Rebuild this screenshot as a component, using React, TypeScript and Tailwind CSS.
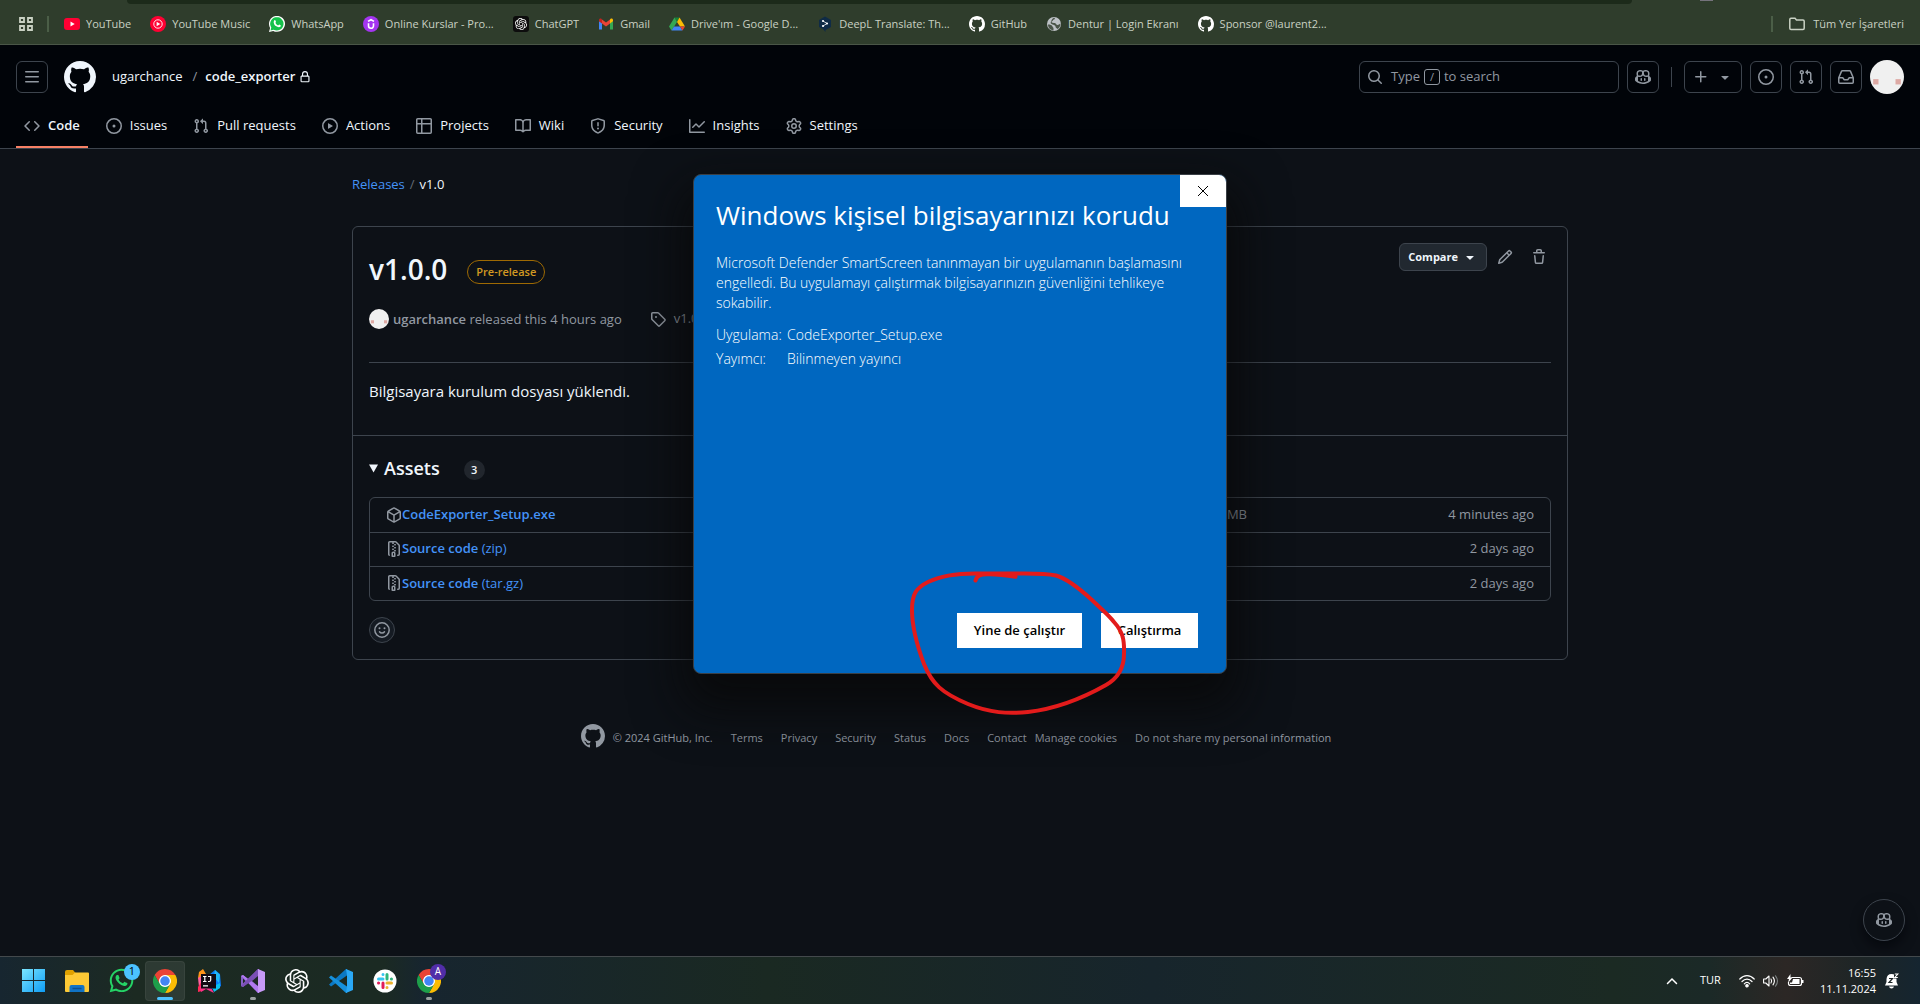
import type { ReactNode } from "react";
import { FaWhatsapp } from "react-icons/fa6";
import { SiOpenai } from "react-icons/si";

const paths = {
  github:
    "M8 0C3.58 0 0 3.58 0 8c0 3.54 2.29 6.53 5.47 7.59.4.07.55-.17.55-.38 0-.19-.01-.82-.01-1.49-2.01.37-2.53-.49-2.69-.94-.09-.23-.48-.94-.82-1.13-.28-.15-.68-.52-.01-.53.63-.01 1.08.58 1.23.82.72 1.21 1.87.87 2.33.66.07-.52.28-.87.51-1.07-1.78-.2-3.64-.89-3.64-3.95 0-.87.31-1.59.82-2.15-.08-.2-.36-1.02.08-2.12 0 0 .67-.21 2.2.82.64-.18 1.32-.27 2-.27.68 0 1.36.09 2 .27 1.53-1.04 2.2-.82 2.2-.82.44 1.1.16 1.92.08 2.12.51.56.82 1.27.82 2.15 0 3.07-1.87 3.75-3.65 3.95.29.25.54.73.54 1.48 0 1.07-.01 1.93-.01 2.2 0 .21.15.46.55.38A8.013 8.013 0 0016 8c0-4.42-3.58-8-8-8z",
  code: "m11.28 3.22 4.25 4.25a.75.75 0 0 1 0 1.06l-4.25 4.25a.749.749 0 0 1-1.275-.326.749.749 0 0 1 .215-.734L13.94 8l-3.72-3.72a.749.749 0 0 1 .326-1.275.749.749 0 0 1 .734.215Zm-6.56 0a.751.751 0 0 1 1.042.018.751.751 0 0 1 .018 1.042L2.06 8l3.72 3.72a.749.749 0 0 1-.326 1.275.749.749 0 0 1-.734-.215L.47 8.53a.75.75 0 0 1 0-1.06Z",
  issue:
    "M8 9.5a1.5 1.5 0 1 0 0-3 1.5 1.5 0 0 0 0 3ZM8 0a8 8 0 1 1 0 16A8 8 0 0 1 8 0ZM1.5 8a6.5 6.5 0 1 0 13 0 6.5 6.5 0 0 0-13 0Z",
  pull: "M1.5 3.25a2.25 2.25 0 1 1 3 2.122v5.256a2.251 2.251 0 1 1-1.5 0V5.372A2.25 2.25 0 0 1 1.5 3.25Zm5.677-.177L9.573.677A.25.25 0 0 1 10 .854V2.5h1A2.5 2.5 0 0 1 13.5 5v5.628a2.251 2.251 0 1 1-1.5 0V5a1 1 0 0 0-1-1h-1v1.646a.25.25 0 0 1-.427.177L7.177 3.427a.25.25 0 0 1 0-.354ZM3.75 2.5a.75.75 0 1 0 0 1.5.75.75 0 0 0 0-1.5Zm0 9.5a.75.75 0 1 0 0 1.5.75.75 0 0 0 0-1.5Zm8.25.75a.75.75 0 1 0 1.5 0 .75.75 0 0 0-1.5 0Z",
  play: "M8 0a8 8 0 1 1 0 16A8 8 0 0 1 8 0ZM1.5 8a6.5 6.5 0 1 0 13 0 6.5 6.5 0 0 0-13 0Zm4.879-2.773 4.264 2.559a.25.25 0 0 1 0 .428l-4.264 2.559A.25.25 0 0 1 6 10.559V5.442a.25.25 0 0 1 .379-.215Z",
  table:
    "M0 1.75C0 .784.784 0 1.75 0h12.5C15.216 0 16 .784 16 1.75v12.5A1.75 1.75 0 0 1 14.25 16H1.75A1.75 1.75 0 0 1 0 14.25ZM6.5 6.5v8h7.75a.25.25 0 0 0 .25-.25V6.5Zm8-1.5V1.75a.25.25 0 0 0-.25-.25H6.5V5Zm-13 1.5v7.75c0 .138.112.25.25.25H5v-8ZM5 5V1.5H1.75a.25.25 0 0 0-.25.25V5Z",
  book: "M0 1.75A.75.75 0 0 1 .75 1h4.253c1.227 0 2.317.59 3 1.501A3.743 3.743 0 0 1 11.006 1h4.245a.75.75 0 0 1 .75.75v10.5a.75.75 0 0 1-.75.75h-4.507a2.25 2.25 0 0 0-1.591.659l-.622.621a.75.75 0 0 1-1.06 0l-.622-.621A2.25 2.25 0 0 0 5.258 13H.75a.75.75 0 0 1-.75-.75Zm7.251 10.324.004-5.073-.002-2.253A2.25 2.25 0 0 0 5.003 2.5H1.5v9h3.757a3.75 3.75 0 0 1 1.994.574ZM8.755 4.75l-.004 7.322a3.752 3.752 0 0 1 1.992-.572H14.5v-9h-3.495a2.25 2.25 0 0 0-2.25 2.25Z",
  shield:
    "M7.467.133a1.748 1.748 0 0 1 1.066 0l5.25 1.68A1.75 1.75 0 0 1 15 3.48V7c0 1.566-.32 3.182-1.303 4.682-.983 1.498-2.585 2.813-5.032 3.855a1.697 1.697 0 0 1-1.33 0c-2.447-1.042-4.049-2.357-5.032-3.855C1.32 10.182 1 8.566 1 7V3.48a1.75 1.75 0 0 1 1.217-1.667Zm.61 1.429a.25.25 0 0 0-.153 0l-5.25 1.68a.25.25 0 0 0-.174.238V7c0 1.358.275 2.666 1.057 3.86.784 1.194 2.121 2.34 4.366 3.297a.196.196 0 0 0 .154 0c2.245-.956 3.582-2.104 4.366-3.298C13.225 9.666 13.5 8.36 13.5 7V3.48a.251.251 0 0 0-.174-.237l-5.25-1.68ZM8.75 4.75v3a.75.75 0 0 1-1.5 0v-3a.75.75 0 0 1 1.5 0ZM9 10.5a1 1 0 1 1-2 0 1 1 0 0 1 2 0Z",
  graph:
    "M1.5 1.75V13.5h13.75a.75.75 0 0 1 0 1.5H.75a.75.75 0 0 1-.75-.75V1.75a.75.75 0 0 1 1.5 0Zm14.28 2.53-5.25 5.25a.75.75 0 0 1-1.06 0L7 7.06 4.28 9.78a.751.751 0 0 1-1.042-.018.751.751 0 0 1-.018-1.042l3.25-3.25a.75.75 0 0 1 1.06 0L10 7.94l4.72-4.72a.751.751 0 0 1 1.042.018.751.751 0 0 1 .018 1.042Z",
  gear: "M8 0a8.2 8.2 0 0 1 .701.031C9.444.095 9.99.645 10.16 1.29l.288 1.107c.018.066.079.158.212.224.231.114.454.243.668.386.123.082.233.09.299.071l1.103-.303c.644-.176 1.392.021 1.82.63.27.385.506.792.704 1.218.315.675.111 1.422-.364 1.891l-.814.806c-.049.048-.098.147-.088.294.016.257.016.515 0 .772-.01.147.038.246.088.294l.814.806c.475.469.679 1.216.364 1.891a7.977 7.977 0 0 1-.704 1.217c-.428.61-1.176.807-1.82.63l-1.102-.302c-.067-.019-.177-.011-.3.071a5.909 5.909 0 0 1-.668.386c-.133.066-.194.158-.211.224l-.29 1.106c-.168.646-.715 1.196-1.458 1.26a8.006 8.006 0 0 1-1.402 0c-.743-.064-1.289-.614-1.458-1.26l-.289-1.106c-.018-.066-.079-.158-.212-.224a5.738 5.738 0 0 1-.668-.386c-.123-.082-.233-.09-.299-.071l-1.103.303c-.644.176-1.392-.021-1.82-.63a8.12 8.12 0 0 1-.704-1.218c-.315-.675-.111-1.422.363-1.891l.815-.806c.05-.048.098-.147.088-.294a6.214 6.214 0 0 1 0-.772c.01-.147-.038-.246-.088-.294l-.815-.806C.635 6.045.431 5.298.746 4.623a7.92 7.92 0 0 1 .704-1.217c.428-.61 1.176-.807 1.82-.63l1.102.302c.067.019.177.011.3-.071.214-.143.437-.272.668-.386.133-.066.194-.158.211-.224l.29-1.106C6.009.645 6.556.095 7.299.03 7.53.01 7.764 0 8 0Zm-.571 1.525c-.036.003-.108.036-.137.146l-.289 1.105c-.147.561-.549.967-.998 1.189-.173.086-.34.183-.5.29-.417.278-.97.423-1.529.27l-1.103-.303c-.109-.03-.175.016-.195.045-.22.312-.412.644-.573.99-.014.031-.021.11.059.19l.815.806c.411.406.562.957.53 1.456a4.709 4.709 0 0 0 0 .582c.032.499-.119 1.05-.53 1.456l-.815.806c-.081.08-.073.159-.059.19.162.346.353.677.573.989.02.03.085.076.195.046l1.102-.303c.56-.153 1.113-.008 1.53.27.161.107.328.204.501.29.447.222.85.629.997 1.189l.289 1.105c.029.109.101.143.137.146a6.6 6.6 0 0 0 1.142 0c.036-.003.108-.036.137-.146l.289-1.105c.147-.561.549-.967.998-1.189.173-.086.34-.183.5-.29.417-.278.97-.423 1.529-.27l1.103.303c.109.029.175-.016.195-.045.22-.313.411-.644.573-.99.014-.031.021-.11-.059-.19l-.815-.806c-.411-.406-.562-.957-.53-1.456a4.709 4.709 0 0 0 0-.582c-.032-.499.119-1.05.53-1.456l.815-.806c.081-.08.073-.159.059-.19a6.464 6.464 0 0 0-.573-.989c-.02-.03-.085-.076-.195-.046l-1.102.303c-.56.153-1.113.008-1.53-.27a4.44 4.44 0 0 0-.501-.29c-.447-.222-.85-.629-.997-1.189l-.289-1.105c-.029-.11-.101-.143-.137-.146a6.6 6.6 0 0 0-1.142 0ZM11 8a3 3 0 1 1-6 0 3 3 0 0 1 6 0ZM9.5 8a1.5 1.5 0 1 0-3.001.001A1.5 1.5 0 0 0 9.5 8Z",
  lock: "M4 4a4 4 0 0 1 8 0v2h.25c.966 0 1.75.784 1.75 1.75v5.5A1.75 1.75 0 0 1 12.25 15h-8.5A1.75 1.75 0 0 1 2 13.25v-5.5C2 6.784 2.784 6 3.75 6H4Zm8.25 3.5h-8.5a.25.25 0 0 0-.25.25v5.5c0 .138.112.25.25.25h8.5a.25.25 0 0 0 .25-.25v-5.5a.25.25 0 0 0-.25-.25ZM10.5 6V4a2.5 2.5 0 1 0-5 0v2Z",
  search:
    "M10.68 11.74a6 6 0 0 1-7.922-8.982 6 6 0 0 1 8.982 7.922l3.04 3.04a.749.749 0 0 1-.326 1.275.749.749 0 0 1-.734-.215ZM11.5 7a4.499 4.499 0 1 0-8.997 0A4.499 4.499 0 0 0 11.5 7Z",
  plus: "M7.75 2a.75.75 0 0 1 .75.75V7h4.25a.75.75 0 0 1 0 1.5H8.5v4.25a.75.75 0 0 1-1.5 0V8.5H2.75a.75.75 0 0 1 0-1.5H7V2.75A.75.75 0 0 1 7.75 2Z",
  caret: "m4.427 7.427 3.396 3.396a.25.25 0 0 0 .354 0l3.396-3.396A.25.25 0 0 0 11.396 7H4.604a.25.25 0 0 0-.177.427Z",
  inbox:
    "M2.8 2.06A1.75 1.75 0 0 1 4.41 1h7.18c.7 0 1.333.417 1.61 1.06l2.74 6.395c.04.093.06.194.06.295v4.5A1.75 1.75 0 0 1 14.25 15H1.75A1.75 1.75 0 0 1 0 13.25v-4.5c0-.101.02-.202.06-.295Zm1.61.44a.25.25 0 0 0-.23.152L1.887 8H4.75a.75.75 0 0 1 .6.3L6.625 10h2.75l1.275-1.7a.75.75 0 0 1 .6-.3h2.863L11.82 2.652a.25.25 0 0 0-.23-.152Zm10.09 7h-2.875l-1.275 1.7a.75.75 0 0 1-.6.3h-3.5a.75.75 0 0 1-.6-.3L4.375 9.5H1.5v3.75c0 .138.112.25.25.25h12.5a.25.25 0 0 0 .25-.25Z",
  bars: "M1 2.75A.75.75 0 0 1 1.75 2h12.5a.75.75 0 0 1 0 1.5H1.75A.75.75 0 0 1 1 2.75Zm0 5A.75.75 0 0 1 1.75 7h12.5a.75.75 0 0 1 0 1.5H1.75A.75.75 0 0 1 1 7.75ZM1.75 12h12.5a.75.75 0 0 1 0 1.5H1.75a.75.75 0 0 1 0-1.5Z",
  copilot:
    "M7.998 15.035c-4.562 0-7.873-2.914-7.998-3.749V9.338c.085-.628.677-1.686 1.588-2.065.013-.07.024-.143.036-.218.029-.183.06-.384.126-.612-.201-.508-.254-1.084-.254-1.656 0-.87.128-1.769.693-2.484.579-.733 1.494-1.124 2.724-1.261 1.206-.134 2.262.034 2.944.765.05.053.096.108.139.165.044-.057.094-.112.143-.165.682-.731 1.738-.899 2.944-.765 1.23.137 2.145.528 2.724 1.261.566.715.693 1.614.693 2.484 0 .572-.053 1.148-.254 1.656.066.228.098.429.126.612.012.076.024.148.037.218.924.385 1.522 1.471 1.591 2.095v1.872c0 .766-3.351 3.795-8.002 3.795Zm0-1.485c2.28 0 4.584-1.11 5.002-1.433V7.862l-.023-.116c-.49.21-1.075.291-1.727.291-1.146 0-2.059-.327-2.71-.991A3.222 3.222 0 0 1 8 6.303a3.24 3.24 0 0 1-.544.743c-.65.664-1.563.991-2.71.991-.652 0-1.236-.081-1.727-.291l-.023.116v4.255c.419.323 2.722 1.433 5.002 1.433ZM6.762 2.83c-.193-.206-.637-.413-1.682-.297-1.019.113-1.479.404-1.713.7-.247.312-.369.789-.369 1.554 0 .793.129 1.171.308 1.371.162.181.519.379 1.442.379.853 0 1.339-.235 1.638-.54.315-.322.527-.827.617-1.553.117-.935-.037-1.395-.241-1.614Zm4.155-.297c-1.044-.116-1.488.091-1.681.297-.204.219-.359.679-.242 1.614.091.726.303 1.231.618 1.553.299.305.784.54 1.638.54.922 0 1.28-.198 1.442-.379.179-.2.308-.578.308-1.371 0-.765-.123-1.242-.37-1.554-.233-.296-.693-.587-1.713-.7ZM6.25 9.037a.75.75 0 0 1 .75.75v1.501a.75.75 0 0 1-1.5 0V9.787a.75.75 0 0 1 .75-.75Zm4.25.75v1.501a.75.75 0 0 1-1.5 0V9.787a.75.75 0 0 1 1.5 0Z",
  pencil:
    "M11.013 1.427a1.75 1.75 0 0 1 2.474 0l1.086 1.086a1.75 1.75 0 0 1 0 2.474l-8.61 8.61c-.21.21-.47.364-.756.445l-3.251.93a.75.75 0 0 1-.927-.928l.929-3.25c.081-.286.235-.547.445-.758l8.61-8.61Zm.176 4.823L9.75 4.81l-6.286 6.287a.253.253 0 0 0-.064.108l-.558 1.953 1.953-.558a.253.253 0 0 0 .108-.064Zm1.238-3.763a.25.25 0 0 0-.354 0L10.811 3.75l1.439 1.44 1.263-1.263a.25.25 0 0 0 0-.354Z",
  trash:
    "M11 1.75V3h2.25a.75.75 0 0 1 0 1.5H2.75a.75.75 0 0 1 0-1.5H5V1.75C5 .784 5.784 0 6.75 0h2.5C10.216 0 11 .784 11 1.75ZM4.496 6.675l.66 6.6a.25.25 0 0 0 .249.225h5.19a.25.25 0 0 0 .249-.225l.66-6.6a.75.75 0 0 1 1.492.149l-.66 6.6A1.748 1.748 0 0 1 10.595 15h-5.19a1.75 1.75 0 0 1-1.741-1.575l-.66-6.6a.75.75 0 1 1 1.492-.15ZM6.5 1.75V3h3V1.75a.25.25 0 0 0-.25-.25h-2.5a.25.25 0 0 0-.25.25Z",
  tag: "M1 7.775V2.75C1 1.784 1.784 1 2.75 1h5.025c.464 0 .91.184 1.238.513l6.25 6.25a1.75 1.75 0 0 1 0 2.474l-5.026 5.026a1.75 1.75 0 0 1-2.474 0l-6.25-6.25A1.752 1.752 0 0 1 1 7.775Zm1.5 0c0 .066.026.13.073.177l6.25 6.25a.25.25 0 0 0 .354 0l5.025-5.025a.25.25 0 0 0 0-.354l-6.25-6.25a.25.25 0 0 0-.177-.073H2.75a.25.25 0 0 0-.25.25ZM6 5a1 1 0 1 1 0 2 1 1 0 0 1 0-2Z",
  package:
    "m8.878.392 5.25 3.045c.54.314.872.89.872 1.514v6.098a1.75 1.75 0 0 1-.872 1.514l-5.25 3.045a1.75 1.75 0 0 1-1.756 0l-5.25-3.045A1.75 1.75 0 0 1 1 11.049V4.951c0-.624.332-1.201.872-1.514L7.122.392a1.75 1.75 0 0 1 1.756 0ZM7.875 1.69l-4.63 2.685L8 7.133l4.755-2.758-4.63-2.685a.248.248 0 0 0-.25 0ZM2.5 5.677v5.372c0 .09.047.171.125.216l4.625 2.683V8.432Zm6.25 8.271 4.625-2.683a.25.25 0 0 0 .125-.216V5.677L8.75 8.432Z",
  zip: "M3.5 1.75v11.5c0 .09.048.173.126.217a.75.75 0 0 1-.752 1.298A1.748 1.748 0 0 1 2 13.25V1.75C2 .784 2.784 0 3.75 0h5.586c.464 0 .909.185 1.237.513l2.914 2.914c.329.328.513.773.513 1.237v8.586A1.75 1.75 0 0 1 12.25 15h-.5a.75.75 0 0 1 0-1.5h.5a.25.25 0 0 0 .25-.25V4.664a.25.25 0 0 0-.073-.177L9.513 1.573a.25.25 0 0 0-.177-.073H7.25a.75.75 0 0 1 0 1.5h-.5a.75.75 0 0 1 0-1.5h-3a.25.25 0 0 0-.25.25Zm3.75 8.75h.5c.966 0 1.75.784 1.75 1.75v3a.75.75 0 0 1-.75.75h-2.5a.75.75 0 0 1-.75-.75v-3c0-.966.784-1.75 1.75-1.75ZM6 5.25a.75.75 0 0 1 .75-.75h.5a.75.75 0 0 1 0 1.5h-.5A.75.75 0 0 1 6 5.25Zm.75 2.25h.5a.75.75 0 0 1 0 1.5h-.5a.75.75 0 0 1 0-1.5ZM8 6.75A.75.75 0 0 1 8.75 6h.5a.75.75 0 0 1 0 1.5h-.5A.75.75 0 0 1 8 6.75ZM8.75 3h.5a.75.75 0 0 1 0 1.5h-.5a.75.75 0 0 1 0-1.5ZM8 9.75A.75.75 0 0 1 8.75 9h.5a.75.75 0 0 1 0 1.5h-.5A.75.75 0 0 1 8 9.75Zm-1 2.5v2.25h1v-2.25a.25.25 0 0 0-.25-.25h-.5a.25.25 0 0 0-.25.25Z",
};

type IconName = keyof typeof paths;

function Icon({ name, className = "size-4" }: { name: IconName; className?: string }) {
  return (
    <svg viewBox="0 0 16 16" className={`shrink-0 ${className}`} fill="currentColor" fillRule={name === "github" ? "evenodd" : undefined} aria-hidden="true">
      <path d={paths[name]} />
    </svg>
  );
}

function Avatar({ className }: { className: string }) {
  return (
    <svg viewBox="0 0 32 32" className={`shrink-0 rounded-full ${className}`} aria-hidden="true">
      <rect width="32" height="32" fill="#f0f0f0" />
      <rect x="3" y="18" width="5" height="5" fill="#dda9a4" />
      <rect x="24" y="18" width="5" height="5" fill="#dda9a4" />
    </svg>
  );
}

function Chrome({ className }: { className: string }) {
  return (
    <svg viewBox="0 0 48 48" className={className} aria-hidden="true">
      <circle cx="24" cy="24" r="13" fill="#fff" />
      <path fill="#ea4335" d="M3.215 12A24 24 0 0 1 44.785 12H24A12 12 0 0 0 13.61 30Z" />
      <path fill="#fbbc04" d="M44.785 12A24 24 0 0 1 24 48L34.39 30A12 12 0 0 0 24 12Z" />
      <path fill="#1e9e4a" d="M24 48A24 24 0 0 1 3.215 12L13.61 30A12 12 0 0 0 34.39 30Z" />
      <circle cx="24" cy="24" r="9.5" fill="#4285f4" />
    </svg>
  );
}

const bookmarks: { label: string; icon: ReactNode }[] = [
  {
    label: "YouTube",
    icon: (
      <svg viewBox="0 0 16 16" className="size-4">
        <rect y="2" width="16" height="12" rx="3" fill="#ff0033" />
        <path d="M6.5 5.5v5L10.7 8z" fill="#fff" />
      </svg>
    ),
  },
  {
    label: "YouTube Music",
    icon: (
      <svg viewBox="0 0 16 16" className="size-4">
        <circle cx="8" cy="8" r="8" fill="#ff0033" />
        <circle cx="8" cy="8" r="4.2" fill="none" stroke="#fff" strokeWidth=".9" />
        <path d="M6.6 5.8v4.4L10.3 8z" fill="#fff" />
      </svg>
    ),
  },
  {
    label: "WhatsApp",
    icon: (
      <svg viewBox="0 0 16 16" className="size-4">
        <path d="M0 16l1.1-4.1A8 8 0 1 1 4.2 14.9z" fill="#fff" />
        <path d="M1.5 14.5l.8-2.9A6.7 6.7 0 1 1 4.6 13.7z" fill="#15c24b" />
        <path d="M5.4 4.2c.4-.3.8-.2 1 .2l.6 1.4c.1.3-.6.9-.5 1.2.6 1.1 1.4 1.9 2.6 2.4.3.1.8-.9 1.1-.8l1.4.7c.4.3.1 1.2-.3 1.5-1.3.9-3 .3-4.4-.7C5.5 9.2 3.7 6.2 5.4 4.2z" fill="#fff" />
      </svg>
    ),
  },
  {
    label: "Online Kurslar - Pro...",
    icon: (
      <svg viewBox="0 0 16 16" className="size-4">
        <circle cx="8" cy="8" r="8" fill="#a435f0" />
        <path d="M5.5 7.2v2.6a2.5 2.5 0 0 0 5 0V7.2M5 5.4L8 3.7l3 1.7" fill="none" stroke="#fff" strokeWidth="1.6" />
      </svg>
    ),
  },
  {
    label: "ChatGPT",
    icon: (
      <span className="flex size-4 items-center justify-center rounded-[3px] bg-[#0d0d0d] text-white">
        <SiOpenai className="size-3" />
      </span>
    ),
  },
  {
    label: "Gmail",
    icon: (
      <svg viewBox="0 0 16 16" className="size-4">
        <path d="M1 5v8.500h3V7z" fill="#4285f4" />
        <path d="M15 5v8.500h-3V7z" fill="#34a853" />
        <path d="M12 3.500V7.500l3-2.300V4c0-1.500-1.500-2-2.400-1.200z" fill="#fbbc04" />
        <path d="M4 3.500v4L8 10.500l4-3v-4L8 6.500z" fill="#ea4335" />
        <path d="M1 4v1.200l3 2.300v-4l-.6-.7C2.500 2 1 2.500 1 4z" fill="#c5221f" />
      </svg>
    ),
  },
  {
    label: "Drive'ım - Google D...",
    icon: (
      <svg viewBox="0 0 16 16" className="size-4">
        <path d="M5.500 1.500h5L8 6z" fill="#188038" />
        <path d="M5.500 1.500L0 10.500l2.500 4L8 6z" fill="#34a853" />
        <path d="M10.500 1.500L8 6l3 4.500h5z" fill="#fbbc04" />
        <path d="M5 10.500l-2.500 4h11L11 10.500z" fill="#4285f4" />
        <path d="M11 10.500h5l-2.500 4z" fill="#ea4335" />
      </svg>
    ),
  },
  {
    label: "DeepL Translate: Th...",
    icon: (
      <svg viewBox="0 0 16 16" className="size-4">
        <path d="M8 .5l6 3.400v7L8.500 14v2L6 12.900 2 10.900v-7z" fill="#0f2b46" />
        <path d="M6 5l4 2.500-4 2.500" fill="none" stroke="#fff" strokeWidth=".8" />
        <g fill="#fff">
          <circle cx="6" cy="5" r="1.100" />
          <circle cx="10" cy="7.500" r="1.100" />
          <circle cx="6" cy="10" r="1.100" />
        </g>
      </svg>
    ),
  },
  { label: "GitHub", icon: <Icon name="github" className="size-4 text-white" /> },
  {
    label: "Dentur | Login Ekranı",
    icon: (
      <svg viewBox="0 0 16 16" className="size-4">
        <circle cx="8" cy="8" r="7" fill="#bdc1c6" />
        <path d="M2 8.500c2 0 4 .5 4.500 2s1 .5 1 2v2C4.500 14 2 12 2 8.500zM8 1.800c1.500.2 1 1.500 0 1.700S7 5 6 5.200 5.500 7 8 7s2 2 3.500 2 1.500-1 3-1.500c0 3-1.500 4.500-3 5.500-.5-1-2-1-2-2.500S7.500 9 6.500 8.500 4 7.500 5 5.500 6.500 2 8 1.800z" fill="#4a5449" />
      </svg>
    ),
  },
  { label: "Sponsor @laurent2...", icon: <Icon name="github" className="size-4 text-white" /> },
];

function BookmarksBar() {
  return (
    <div className="relative flex h-[45px] items-center border-b border-[#4a5647] bg-[#2f3d2c] pt-1 pr-4 pl-[19px] text-[11px] text-[#c9d1c3]">
      <div className="absolute top-0 right-[288px] left-[127px] h-1 rounded-b-full bg-[#1c2a1a]" />
      <div className="absolute top-0 right-[207px] h-px w-[13px] bg-[#75737c]" />
      <button aria-label="Uygulamalar">
        <svg viewBox="0 0 14 14" className="size-3.5" fill="none" stroke="currentColor" strokeWidth="1.8">
          <path d="M1 1h4v4H1zM9 1h4v4H9zM1 9h4v4H1zM9 9h4v4H9z" />
        </svg>
      </button>
      <span className="mr-[15px] ml-3.5 h-4 w-0.5 bg-[#4b5e47]" />
      <nav className="flex flex-1 items-center gap-[19px]" aria-label="Yer işaretleri">
        {bookmarks.map((b) => (
          <a key={b.label} href="#" className="flex items-center gap-1.5 whitespace-nowrap">
            {b.icon}
            {b.label}
          </a>
        ))}
      </nav>
      <span className="mr-4 h-4 w-0.5 bg-[#4b5e47]" />
      <button className="flex items-center gap-2">
        <svg viewBox="0 0 16 16" className="size-4" fill="none" stroke="currentColor" strokeWidth="1.5">
          <path d="M.8 3.500c0-.8.4-1.200 1.200-1.200h4l1.500 1.800h6.500c.8 0 1.200.4 1.200 1.200v7c0 .8-.4 1.200-1.200 1.200H2c-.8 0-1.200-.4-1.200-1.200z" />
        </svg>
        Tüm Yer İşaretleri
      </button>
    </div>
  );
}

const tabs: { label: string; icon: IconName }[] = [
  { label: "Code", icon: "code" },
  { label: "Issues", icon: "issue" },
  { label: "Pull requests", icon: "pull" },
  { label: "Actions", icon: "play" },
  { label: "Projects", icon: "table" },
  { label: "Wiki", icon: "book" },
  { label: "Security", icon: "shield" },
  { label: "Insights", icon: "graph" },
  { label: "Settings", icon: "gear" },
];

function SquareButton({ icon, label }: { icon: IconName; label: string }) {
  return (
    <button aria-label={label} className="flex size-8 items-center justify-center rounded-md border border-[#3d444d] text-[#9198a1]">
      <Icon name={icon} />
    </button>
  );
}

function Header() {
  return (
    <header className="border-b border-[#3d444d] bg-[#010409] text-[13px] text-[#f0f6fc]">
      <div className="flex h-14 items-center px-4 pt-4 pb-2">
        <SquareButton icon="bars" label="Open menu" />
        <a href="#" aria-label="Homepage" className="ml-4">
          <Icon name="github" className="size-8" />
        </a>
        <div className="ml-4 flex flex-1 items-center">
          <a href="#">ugarchance</a>
          <span className="mr-2 ml-2.5 text-[#9198a1]">/</span>
          <a href="#" className="font-semibold">
            code_exporter
          </a>
          <Icon name="lock" className="ml-1 size-3 text-[#f0f6fc]" />
        </div>
        <label className="relative flex h-8 w-[260px] items-center rounded-md border border-[#3d444d] px-[7px] text-[#9198a1]">
          <Icon name="search" />
          <span className="ml-2 flex items-center gap-1">
            Type
            <kbd className="flex h-4 w-4 items-center justify-center rounded-[3px] border border-[#9198a1] font-[inherit] text-[11px]">/</kbd>
            to search
          </span>
          <input aria-label="Type / to search" className="absolute inset-0 rounded-md bg-transparent px-8 outline-none" />
        </label>
        <div className="ml-2 flex items-center gap-2">
          <SquareButton icon="copilot" label="Copilot" />
          <span className="mx-1 h-5 w-px bg-[#3d444d]" />
          <button aria-label="Create new" className="flex h-8 w-[58px] items-center justify-between rounded-md border border-[#3d444d] px-2 text-[#9198a1]">
            <Icon name="plus" />
            <Icon name="caret" />
          </button>
          <SquareButton icon="issue" label="Issues" />
          <SquareButton icon="pull" label="Pull requests" />
          <SquareButton icon="inbox" label="Notifications" />
          <button aria-label="Open user menu">
            <Avatar className="size-[34px]" />
          </button>
        </div>
      </div>
      <nav className="flex h-[47px] gap-2.5 px-4" aria-label="Repository">
        {tabs.map((t, i) => (
          <a
            key={t.label}
            href="#"
            className={`flex items-center gap-2 border-b-2 px-2 pt-1 ${i === 0 ? "border-[#f78166] font-semibold" : "border-transparent"}`}
          >
            <Icon name={t.icon} className="size-4 text-[#9198a1]" />
            {t.label}
          </a>
        ))}
      </nav>
    </header>
  );
}

const assets: { icon: IconName; name: string; suffix?: string; size: string; time: string }[] = [
  { icon: "package", name: "CodeExporter_Setup.exe", size: "MB", time: "4 minutes ago" },
  { icon: "zip", name: "Source code", suffix: "(zip)", size: "", time: "2 days ago" },
  { icon: "zip", name: "Source code", suffix: "(tar.gz)", size: "", time: "2 days ago" },
];

function Release() {
  return (
    <div className="mx-auto w-full max-w-[1216px] pt-[25px] text-[13px] text-[#f0f6fc]">
      <nav className="leading-5" aria-label="Breadcrumb">
        <a href="#" className="text-[#4493f8]">
          Releases
        </a>
        <span className="mx-[5px] text-[#656c76]">/</span>
        <a href="#">v1.0</a>
      </nav>

      <section className="mt-8 rounded-md border border-[#3d444d]">
        <div className="border-b border-[#3d444d] px-4 pt-4 pb-8">
          <div className="flex items-start justify-between">
            <div className="flex items-center gap-5">
              <h1 className="text-[28px] leading-[52px] font-semibold">v1.0.0</h1>
              <span className="mt-1.5 flex h-6 items-center rounded-full border border-[#9e6a03] px-2 text-[11px] font-semibold text-[#d29922]">Pre-release</span>
            </div>
            <div className="flex items-center pr-1">
              <button className="flex h-7 items-center gap-1 rounded-md border border-[#3d444d] bg-[#212830] px-2 text-[11px] font-bold">
                Compare
                <Icon name="caret" />
              </button>
              <button aria-label="Edit" className="ml-2.5 text-[#9198a1]">
                <Icon name="pencil" />
              </button>
              <button aria-label="Delete" className="ml-[18px] text-[#9198a1]">
                <Icon name="trash" />
              </button>
            </div>
          </div>
          <div className="mt-3 flex items-center text-[#9198a1]">
            <Avatar className="size-5" />
            <p className="ml-1 leading-6">
              <a href="#" className="font-semibold">
                ugarchance
              </a>{" "}
              released this 4 hours ago
            </p>
            <a href="#" className="ml-7 flex items-center gap-2">
              <Icon name="tag" />
              v1.0
            </a>
          </div>
          <hr className="mt-[31px] border-[#3d444d]" />
          <p className="mt-4 text-[15px] leading-6">Bilgisayara kurulum dosyası yüklendi.</p>
        </div>

        <div className="p-4">
          <details open>
            <summary className="flex h-8 list-none items-center">
              <svg viewBox="0 0 9 9" className="size-[9px]" aria-hidden="true">
                <path d="M0 .5h9l-4.500 8z" fill="currentColor" />
              </svg>
              <h2 className="ml-1.5 text-lg font-semibold">Assets</h2>
              <span className="mt-1 ml-6 flex h-5 w-[21px] items-center justify-center rounded-full bg-[#21262d] text-[11px] font-semibold">3</span>
            </summary>
            <div className="mt-[13px] rounded-md border border-[#3d444d]">
              <table className="w-full">
                <tbody>
                  {assets.map((a) => (
                    <tr key={a.name + a.suffix} className="h-[34px] border-b border-[#3d444d] last:border-0">
                      <td className="w-1/2 pl-4">
                        <div className="flex items-center text-[#4493f8]">
                          <Icon name={a.icon} className="size-4 text-[#9198a1]" />
                          <a href="#">
                            <span className="font-semibold">{a.name}</span> {a.suffix}
                          </a>
                        </div>
                      </td>
                      <td className="pr-2 text-right text-[#9198a1]">{a.size}</td>
                      <td className="w-1/4 pr-4 text-right text-[#9198a1]">{a.time}</td>
                    </tr>
                  ))}
                </tbody>
              </table>
            </div>
          </details>
          <button aria-label="Add reaction" className="mt-4 flex size-[26px] items-center justify-center rounded-full border border-[#3d444d] bg-[#151b23] text-[#9198a1]">
            <svg viewBox="0 0 16 16" className="size-4" fill="none" stroke="currentColor" strokeWidth="1.5" strokeLinecap="round" aria-hidden="true">
              <circle cx="8" cy="8" r="7.2" />
              <path d="M5.500 9.800c1.200 1.700 3.800 1.700 5 0" />
              <path d="M5.500 6.200v.1M10.500 6.200v.1" strokeWidth="2" />
            </svg>
          </button>
        </div>
      </section>
    </div>
  );
}

function Footer() {
  return (
    <footer className="mt-16 flex items-end justify-center pr-2 text-[11px] leading-5 text-[#9198a1]">
      <Icon name="github" className="size-6" />
      <span className="ml-2">© 2024 GitHub, Inc.</span>
      <nav className="ml-[18px] flex gap-[18px]" aria-label="Footer">
        {["Terms", "Privacy", "Security", "Status", "Docs", "Contact"].map((l) => (
          <a key={l} href="#">
            {l}
          </a>
        ))}
      </nav>
      <button className="ml-2">Manage cookies</button>
      <button className="ml-[18px]">Do not share my personal information</button>
    </footer>
  );
}

function SmartScreen() {
  return (
    <div
      role="dialog"
      aria-labelledby="ss-title"
      className="absolute top-[174px] left-1/2 flex h-[500px] w-[534px] -translate-x-1/2 flex-col overflow-hidden rounded-lg border border-[#3a3f45] bg-[#0067c0] text-white shadow-[0_24px_48px_12px_rgba(8,8,8,0.75)]"
    >
      <button aria-label="Kapat" className="flex h-8 w-[46px] items-center justify-center self-end bg-white text-black">
        <svg viewBox="0 0 10 10" className="size-2.5" stroke="currentColor" aria-hidden="true">
          <path d="M0 0l10 10M10 0L0 10" />
        </svg>
      </button>
      <div className="-mt-2.5 flex flex-1 flex-col px-[22px] font-light">
        <h2 id="ss-title" className="text-[26px] leading-9 font-normal whitespace-nowrap">
          Windows kişisel bilgisayarınızı korudu
        </h2>
        <p className="mt-5 w-[480px] text-sm leading-5">
          Microsoft Defender SmartScreen tanınmayan bir uygulamanın başlamasını engelledi. Bu uygulamayı çalıştırmak bilgisayarınızın güvenliğini tehlikeye
          sokabilir.
        </p>
        <dl className="mt-2.5 grid grid-cols-[71px_1fr] text-sm leading-6">
          <dt>Uygulama:</dt>
          <dd>CodeExporter_Setup.exe</dd>
          <dt>Yayımcı:</dt>
          <dd>Bilinmeyen yayıncı</dd>
        </dl>
      </div>
      <div className="flex justify-end gap-[19px] pr-7 pb-[25px] text-[13px] font-semibold text-black">
        <button className="h-[35px] w-[125px] bg-white">Yine de çalıştır</button>
        <button className="h-[35px] w-[97px] bg-white">Çalıştırma</button>
      </div>
    </div>
  );
}

function RedCircle() {
  return (
    <svg viewBox="0 0 360 170" className="pointer-events-none absolute top-[560px] left-1/2 -ml-[70px] h-[170px] w-[360px]" fill="none" stroke="#e31b1b" strokeWidth="4" strokeLinecap="round" strokeLinejoin="round" aria-hidden="true">
      <path d="M85.500 20.500C87 15 91 14.500 97 14.300c11-.3 18 .7 28.500 2.500M125.500 13.500H90C65 13 50 16 38 22c-12 6-16 12-16 28 0 18 6 38 12 54C42 124 52 133 78 144c22 9 40 10 60 8 26-3 55-14 78-27 14-8 18-19 18-31 .5-14-1-22-10-32-6-8-14-14-22-22-12-11-24-21-36-24.500-12-2.500-26-2-40.500-2" />
    </svg>
  );
}

function TaskItem({ label, children, state }: { label: string; children: ReactNode; state?: "active" | "open" }) {
  return (
    <button
      aria-label={label}
      className={`relative flex size-10 items-center justify-center rounded ${state === "active" ? "bg-white/8 ring-1 ring-white/5 ring-inset" : ""}`}
    >
      {children}
      {state && <span className={`absolute bottom-px left-1/2 h-[3px] -translate-x-1/2 rounded-full ${state === "active" ? "w-4 bg-[#4cc2ff]" : "w-1.5 bg-[#9aa0a0]"}`} />}
    </button>
  );
}

function Taskbar() {
  return (
    <div className="flex h-12 items-center border-t border-[#43494c] bg-[linear-gradient(90deg,#172630_0%,#1c2a22_7%,#1b2a23_20%,#17252f_22%,#1a2922_40%,#17252c_60%,#1b2a23_84%,#1b2927_89%,#2c2725_93%,#1d2526_97%,#152530_100%)] pl-[13px] text-white">
      <div className="flex flex-1 gap-1">
        <TaskItem label="Başlat">
          <svg viewBox="0 0 23 23" className="size-[23px]">
            <defs>
              <linearGradient id="win" x1="0" y1="0" x2="1" y2="1">
                <stop offset="0" stopColor="#7be6ff" />
                <stop offset="1" stopColor="#0e9cf5" />
              </linearGradient>
            </defs>
            <path fill="url(#win)" d="M0 0h11v11H0zM12 0h11v11H12zM0 12h11v11H0zM12 12h11v11H12z" />
          </svg>
        </TaskItem>
        <TaskItem label="Dosya Gezgini">
          <svg viewBox="0 0 24 22" className="h-[22px] w-6">
            <path d="M0 2q0-2 2-2h6l2.500 3L8 6H0z" fill="#e0a100" />
            <path d="M0 5h7.500l2.500-2.500H23q1 0 1 1V21q0 1-1 1H1q-1 0-1-1z" fill="#fdc935" />
            <path d="M4.500 22v-5q0-2 2-2h11q2 0 2 2v5z" fill="#1073c6" />
            <path d="M7.500 18.500h9" stroke="#0b4f8f" strokeWidth="1.5" />
          </svg>
        </TaskItem>
        <TaskItem label="WhatsApp">
          <FaWhatsapp className="size-[27px] text-[#25d366]" />
          <span className="absolute top-[3px] right-px flex size-4 items-center justify-center rounded-full bg-[#4cc2ff] text-[11px] text-black">1</span>
        </TaskItem>
        <TaskItem label="Google Chrome" state="active">
          <Chrome className="size-6" />
        </TaskItem>
        <TaskItem label="IntelliJ IDEA">
          <svg viewBox="0 0 24 24" className="size-6">
            <path d="M1 9l1-6 4-3 3 5-3 6z" fill="#ff9419" />
            <path d="M1 9l5-3 1 10-5 2z" fill="#ff5f9e" />
            <path d="M1 18l4-6 5 7-5 3-4 1z" fill="#fe2857" />
            <path d="M3 17l8-4 6 11-8-4-5 3z" fill="#fc318c" />
            <path d="M12 6l6-5 5 4 1 12-5 4-7-2z" fill="#087cfa" />
            <path d="M18 1l5 5-1 8-5-6z" fill="#21b7f5" />
            <path d="M15 18l8-4 0 5-6 4z" fill="#07c3f2" />
            <rect x="4" y="5" width="15" height="14.500" fill="#120a14" />
            <path d="M6 7.500h3.500M7.800 7.500v5M6 12.500h3.500M11 7.500h2.700v3.500q0 1.500-1.500 1.500H11M6 16.800h5" stroke="#fff" strokeWidth="1.200" fill="none" />
          </svg>
        </TaskItem>
        <TaskItem label="Visual Studio" state="open">
          <svg viewBox="0 0 24 24" className="size-6">
            <path d="M0 7l2-1 5 4.500L17 0l4 12L17 24 7 13.500 2 18l-2-1z" fill="#8661c5" />
            <path d="M2 9.500v5L4.500 12z" fill="#1d2926" />
            <path d="M0 7l2-1L18 18v6h-1L2 8.500z" fill="#b179f1" />
            <path d="M0 17l2 1L18 7V0h-1L6 10.500z" fill="#7b4fb5" />
            <path d="M17 0l7 3v18l-7 3z" fill="#c799f7" />
            <path d="M17 7v10l-6-5z" fill="#1d2926" />
          </svg>
        </TaskItem>
        <TaskItem label="ChatGPT">
          <SiOpenai className="size-6" />
        </TaskItem>
        <TaskItem label="Visual Studio Code">
          <svg viewBox="0 0 24 24" className="size-6">
            <path d="M0 15.500l2 2L18 6.500V0h-1z" fill="#0b78c4" />
            <path d="M0 8.500l2-2L18 17.500V24h-1z" fill="#1690dc" />
            <path d="M17 0l7 3v18l-7 3 1-6.500v-11z" fill="#2aa8f5" />
          </svg>
        </TaskItem>
        <TaskItem label="Slack">
          <svg viewBox="0 0 24 24" className="size-6" strokeWidth="3" strokeLinecap="round">
            <circle cx="12" cy="12" r="11.500" fill="#fff" />
            <path d="M10 5.500v.1M5.500 10H10" stroke="#36c5f0" />
            <path d="M14 5.500V10M18.500 10h-.1" stroke="#2eb67d" />
            <path d="M14 14H18.500M14 18.500v-.1" stroke="#ecb22e" />
            <path d="M10 14V18.500M5.500 14h.1" stroke="#e01e5a" />
          </svg>
        </TaskItem>
        <TaskItem label="Google Chrome A" state="open">
          <Chrome className="size-6" />
          <span className="absolute top-[3px] right-[3px] flex size-4 items-center justify-center rounded-full bg-[#512da8] text-[10px]">A</span>
        </TaskItem>
      </div>
      <div className="flex items-center pr-[21px] text-[11px]">
        <button aria-label="Gizli simgeler">
          <svg viewBox="0 0 12 8" className="h-2 w-3" fill="none" stroke="#fff" strokeWidth="1.5" strokeLinecap="round">
            <path d="M1.500 6.500L6 2l4.500 4.500" />
          </svg>
        </button>
        <button className="ml-[22px]">TUR</button>
        <button className="ml-[18px] flex items-center gap-2" aria-label="Ağ, ses ve pil">
          <svg viewBox="0 0 16 14" className="h-3.5 w-4" fill="none" stroke="#fff" strokeWidth="1.2" strokeLinecap="round">
            <path d="M.8 5C5 .5 11 .5 15.200 5M3 7.500c3-3.200 7-3.200 10 0M5.300 9.800c1.600-1.800 3.800-1.800 5.400 0" />
            <circle cx="8" cy="11.800" r="1.200" fill="#fff" />
          </svg>
          <svg viewBox="0 0 16 14" className="h-3.5 w-4" fill="none" stroke="#fff" strokeWidth="1.1" strokeLinecap="round" strokeLinejoin="round">
            <path d="M.6 5v4h2.200L6 12V2L2.800 5zM8 5q1.300 2 0 4M10 3.200q2.800 3.800 0 7.600" />
            <path d="M12.500 1.800q4 5.200 0 10.400" stroke="#7b8080" />
          </svg>
          <svg viewBox="0 0 17 14" className="h-3.5 w-[17px]">
            <path d="M4.500 3.500h8q2 0 2 2v4q0 2-2 2h-9q-2 0-2-2V8" fill="none" stroke="#fff" strokeWidth="1.2" />
            <path d="M6 5h6.500v5H3V8.500h2zM15 6h1.500v3H15zM3.500 0L0 5h2L1 9l4.500-5.500H3.500z" fill="#fff" />
          </svg>
        </button>
        <button className="ml-4 flex items-center gap-2">
          <span className="text-right leading-4">
            16:55
            <br />
            11.11.2024
          </span>
          <svg viewBox="0 0 15 16" className="h-4 w-[15px]">
            <path d="M1 12.500L2.500 9V6Q3 1 7.500 1 12 1 12.500 6v3l1.500 3.500zM5 13.500h5q-.5 2-2.500 2T5 13.500z" fill="#fff" />
            <path d="M5 5.500h3.500L5 9.500h3.500" fill="none" stroke="#1d2526" strokeWidth="1.2" />
            <path d="M10 0h5v5.500h-5z" fill="#1d2526" />
            <path d="M10.800 1h3L10.800 4.500h3" fill="none" stroke="#fff" strokeWidth="1.1" />
          </svg>
        </button>
      </div>
    </div>
  );
}

export default function App() {
  return (
    <div className="relative flex min-h-screen flex-col bg-[#0d1117] font-['Open_Sans','Noto_Sans',sans-serif]">
      <BookmarksBar />
      <Header />
      <main className="flex flex-1 flex-col">
        <Release />
        <Footer />
        <button
          aria-label="Chat with Copilot"
          className="mt-auto mr-[15px] mb-[15px] flex size-[42px] items-center justify-center self-end rounded-full border border-[#3d444d] bg-[#0d1117] text-[#9198a1] shadow-[0_6px_12px_rgba(1,4,9,0.6)]"
        >
          <Icon name="copilot" />
        </button>
      </main>
      <Taskbar />
      <SmartScreen />
      <RedCircle />
    </div>
  );
}
